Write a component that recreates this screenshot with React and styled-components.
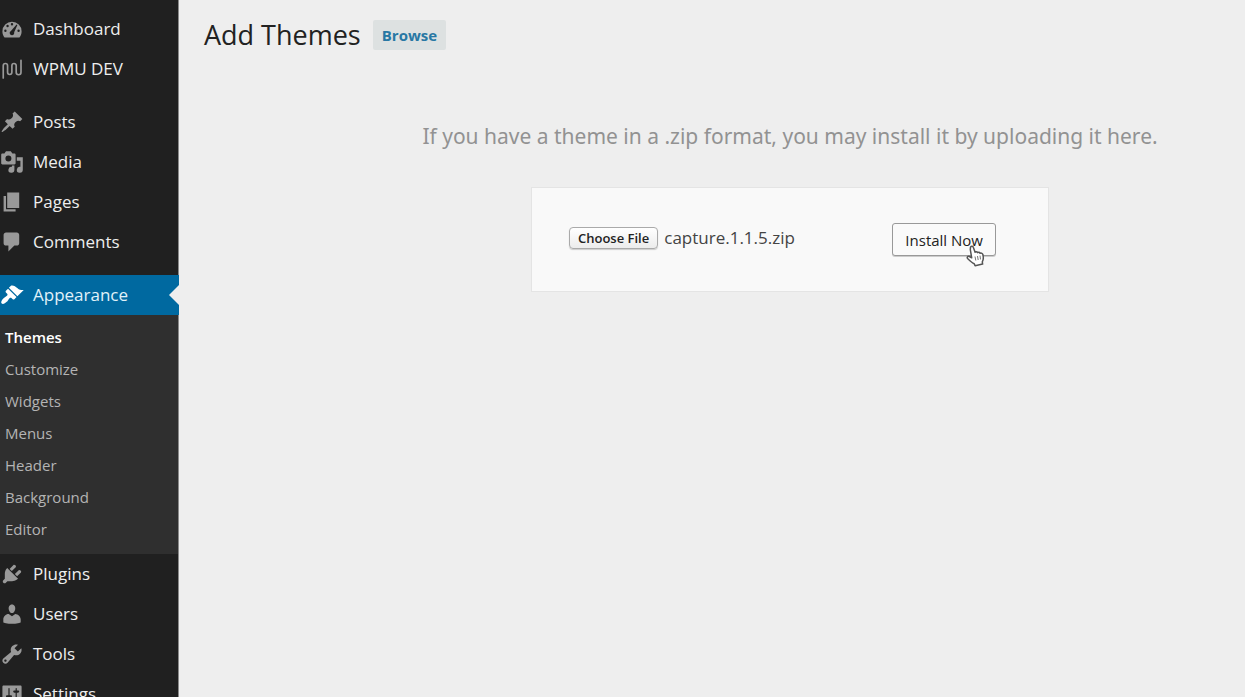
import React, { useRef, useState } from "react";
import styled, { createGlobalStyle, css } from "styled-components";

const GlobalStyle = createGlobalStyle`
  *, *::before, *::after { box-sizing: border-box; }
  body {
    margin: 0;
    background: #eee;
    color: #333;
    font-family: "Open Sans", "Noto Sans", sans-serif;
  }
`;

const Page = styled.div`
  display: flex;
  height: 100vh;
  overflow: hidden;
`;

const Sidebar = styled.nav`
  flex: none;
  width: 179px;
  padding-top: 9px;
  background: #202020;
  border-right: 1px solid #8a8a8a;
`;

const MenuGroup = styled.ul`
  margin: 0;
  padding: 0;
  list-style: none;

  & + & {
    margin-top: 13px;
  }
`;

const MenuLink = styled.a`
  position: relative;
  display: flex;
  align-items: center;
  gap: 9px;
  height: 40px;
  color: #eee;
  font-size: 17px;
  line-height: 24px;
  text-decoration: none;

  ${({ $current }) =>
    $current &&
    css`
      margin-right: -1px;
      background: #0069a0;
      color: #e0f2fa;

      &::after {
        content: "";
        position: absolute;
        right: 0;
        top: 10px;
        border: 10px solid transparent;
        border-left-width: 0;
        border-right-color: #eee;
      }
    `}
`;

const MenuIcon = styled.svg`
  flex: none;
  width: 24px;
  height: 24px;
  fill: ${({ $current }) => ($current ? "#fff" : "#999")};
`;

const SubMenu = styled.ul`
  margin: 0;
  padding: 6px 0 9px;
  list-style: none;
  background: #2f2f2f;
`;

const SubLink = styled.a`
  display: block;
  padding-left: 5px;
  color: ${({ $current }) => ($current ? "#fff" : "#b4b4b4")};
  font-size: 15px;
  font-weight: ${({ $current }) => ($current ? 600 : 400)};
  line-height: 32px;
  text-decoration: none;
`;

const Main = styled.main`
  flex: 1;
  min-width: 0;
`;

const Header = styled.header`
  display: flex;
  align-items: center;
  gap: 12px;
  padding: 16px 25px 0;
`;

const Title = styled.h1`
  margin: 0;
  color: #222;
  font-size: 27px;
  font-weight: 400;
  line-height: 38px;
`;

const BrowseLink = styled.a`
  padding: 0 9px;
  border-radius: 2px;
  background: #dde1e1;
  color: #2878a4;
  font-size: 15px;
  font-weight: 700;
  line-height: 30px;
  text-decoration: none;
`;

const Upload = styled.section`
  display: flex;
  flex-direction: column;
  align-items: center;
  gap: 36px;
  padding: 67px 0 0 156px;
`;

const Help = styled.p`
  margin: 0;
  color: #929292;
  font-family: "Noto Sans", "Open Sans", sans-serif;
  font-size: 21px;
  line-height: 30px;
  white-space: nowrap;
`;

const UploadForm = styled.form`
  display: flex;
  align-items: flex-start;
  justify-content: space-between;
  width: 518px;
  padding: 35px 52px 35px 37px;
  border: 1px solid #e4e4e4;
  background: #f9f9f9;
`;

const FilePicker = styled.div`
  display: flex;
  align-items: center;
  gap: 6px;
  height: 30px;
`;

const FileInput = styled.input`
  display: none;
`;

const ChooseButton = styled.button`
  height: 22px;
  padding: 0 8px;
  border: 1px solid #aaa;
  border-radius: 4px;
  background: linear-gradient(#fff, #ececec);
  box-shadow: 0 1px 1px #ccc;
  color: #222;
  font-family: inherit;
  font-size: 13px;
  font-weight: 600;
  line-height: 20px;
`;

const FileName = styled.output`
  color: #444;
  font-size: 17px;
  line-height: 24px;
`;

const InstallWrap = styled.div`
  position: relative;
`;

const InstallButton = styled.button`
  display: block;
  height: 33px;
  padding: 0 12px;
  border: 1px solid #999;
  border-radius: 3px;
  background: #fafafa;
  box-shadow: 0 1px 0 #ccc;
  color: #222;
  font-family: inherit;
  font-size: 15px;
  line-height: 30px;
`;

const Pointer = styled.svg`
  position: absolute;
  left: 73px;
  top: 22px;
  width: 20px;
  height: 22px;
  pointer-events: none;
`;

const icons = {
  dashboard: (
    <path
      fillRule="evenodd"
      d="M3.8 17h12.4c1.1-1.4 1.8-3.1 1.8-5a8 8 0 1 0-16 0c0 1.900.7 3.600 1.800 5zM10 5a1 1 0 1 1 0 2 1 1 0 0 1 0-2zM6.300 6.500a1 1 0 1 1 0 2 1 1 0 0 1 0-2zM13.800 6.200l.7.500-2.700 6.100c.4 1.200-.5 2.400-1.800 2.400a1.900 1.900 0 0 1-.9-3.600zM4.500 10.500a1 1 0 1 1 0 2 1 1 0 0 1 0-2zM15.500 10.500a1 1 0 1 1 0 2 1 1 0 0 1 0-2z"
    />
  ),
  wpmu: (
    <path
      fill="none"
      stroke="#999"
      strokeWidth="1.4"
      strokeLinecap="round"
      d="M2.700 17.500V7.200a1.800 1.800 0 0 1 3.600 0v5.600a1.800 1.800 0 0 0 3.600 0V7.200a1.800 1.800 0 0 1 3.600 0v5.600a2 2 0 0 0 4 0V2.700"
    />
  ),
  posts: (
    <path d="M10.44 3.02l1.82-1.82 6.36 6.35-1.83 1.82c-1.05-.68-2.48-.57-3.41.36l-.75.75c-.92.93-1.04 2.35-.35 3.41l-1.83 1.82-2.41-2.41-2.8 2.79c-.42.42-3.38 2.71-3.8 2.290s1.860-3.390 2.280-3.810l2.790-2.790L4.100 9.360l1.830-1.820c1.050.690 2.480.570 3.400-.360l.750-.750c.930-.920 1.050-2.350.360-3.410z" />
  ),
  media: (
    <path
      fillRule="evenodd"
      d="M13 11V4c0-.55-.45-1-1-1h-1.670L9 1H5L3.670 3H2c-.55 0-1 .45-1 1v7c0 .55.45 1 1 1h10c.55 0 1-.45 1-1zM7 4.500a2.500 2.500 0 1 1 0 5 2.500 2.500 0 0 1 0-5zM14 6h5v10.500a2.500 2.500 0 1 1-2-2.450V9h-3V6zM10 14.050V13h2v3.500a2.500 2.500 0 1 1-2-2.450z"
    />
  ),
  pages: <path d="M6 15V2h10v13H6zm-1 1h8v2H3V5h2v11z" />,
  comments: (
    <path d="M5 2h9c1.1 0 2 .9 2 2v7c0 1.1-.9 2-2 2h-2l-5 5v-5H5c-1.1 0-2-.9-2-2V4c0-1.1.9-2 2-2z" />
  ),
  appearance: (
    <path d="M14.48 11.06L7.41 3.99l1.5-1.5c.5-.56 2.3-.47 3.51.32 1.21.8 1.43 1.28 2.91 2.1 1.18.64 2.45 1.26 4.45.85zm-.71.71L6.7 4.7 4.93 6.47c-.39.39-.39 1.02 0 1.41l1.06 1.06c.39.39.39 1.03 0 1.42-.6.6-1.43 1.11-2.21 1.69-.35.26-.7.53-1.01.84C1.43 14.23.4 16.08 1.4 17.07c.99 1 2.84-.03 4.18-1.36.31-.31.58-.66.85-1.02.57-.78 1.08-1.61 1.69-2.21.39-.39 1.02-.39 1.41 0l1.06 1.06c.39.39 1.02.39 1.41 0z" />
  ),
  plugins: (
    <path d="M13.11 4.36L9.87 7.6 8 5.73l3.24-3.24c.35-.34 1.05-.2 1.56.32.52.51.66 1.21.31 1.55zm-8 1.77l.91-1.12 9.01 9.01-1.19.84c-.71.71-2.63 1.16-3.82 1.16H6.14L4.9 17.26c-.59.59-1.54.59-2.12 0-.59-.58-.59-1.53 0-2.12l1.24-1.24v-3.88c0-1.13.4-3.19 1.09-3.89zm7.26 3.97l3.24-3.24c.34-.35 1.04-.21 1.55.31.52.51.66 1.21.31 1.55l-3.24 3.25z" />
  ),
  users: (
    <path d="M10 9.25c-2.27 0-2.73-3.44-2.73-3.44C7 4.02 7.82 2 9.97 2c2.16 0 2.98 2.02 2.71 3.81 0 0-.41 3.44-2.68 3.44zm0 2.57L12.72 10c2.39 0 4.52 2.33 4.52 4.53v2.49s-3.65 1.13-7.24 1.13c-3.65 0-7.24-1.13-7.24-1.13v-2.49c0-2.25 1.94-4.48 4.47-4.48z" />
  ),
  tools: (
    <path
      fillRule="evenodd"
      d="M16.68 9.77c-1.34 1.34-3.3 1.67-4.95.99l-5.41 6.52c-.99.99-2.59.99-3.58 0s-.99-2.59 0-3.57l6.52-5.42c-.68-1.65-.35-3.61.99-4.95 1.28-1.28 3.12-1.62 4.72-1.06l-2.89 2.89 2.82 2.82 2.86-2.87c.53 1.58.18 3.39-1.08 4.65zM3.81 16.21c.4.39 1.04.39 1.43 0 .4-.4.4-1.04 0-1.43-.39-.4-1.03-.4-1.43 0-.39.39-.39 1.03 0 1.43z"
    />
  ),
  settings: (
    <path
      fillRule="evenodd"
      d="M18 16V4c0-.55-.45-1-1-1H3c-.55 0-1 .45-1 1v12c0 .55.45 1 1 1h14c.55 0 1-.45 1-1zM8 11h1c.55 0 1 .45 1 1s-.45 1-1 1H8v1.5c0 .28-.22.5-.5.5s-.5-.22-.5-.5V13H6c-.55 0-1-.45-1-1s.45-1 1-1h1V5.5c0-.28.22-.5.5-.5s.5.22.5.5V11zm5-2h-1c-.55 0-1-.45-1-1s.45-1 1-1h1V5.5c0-.28.22-.5.5-.5s.5.22.5.5V7h1c.55 0 1 .45 1 1s-.45 1-1 1h-1v5.5c0 .28-.22.5-.5.5s-.5-.22-.5-.5V9z"
    />
  ),
};

const topGroups = [
  [
    ["dashboard", "Dashboard"],
    ["wpmu", "WPMU DEV"],
  ],
  [
    ["posts", "Posts"],
    ["media", "Media"],
    ["pages", "Pages"],
    ["comments", "Comments"],
  ],
];

const themeLinks = ["Themes", "Customize", "Widgets", "Menus", "Header", "Background", "Editor"];

const lowerItems = [
  ["plugins", "Plugins"],
  ["users", "Users"],
  ["tools", "Tools"],
  ["settings", "Settings"],
];

function MenuItem({ icon, label, current, children }) {
  return (
    <li>
      <MenuLink href="#" $current={current}>
        <MenuIcon viewBox="0 0 20 20" $current={current} aria-hidden="true">
          {icons[icon]}
        </MenuIcon>
        {label}
      </MenuLink>
      {children}
    </li>
  );
}

function HandPointer() {
  return (
    <Pointer viewBox="0 0 20 22" aria-hidden="true">
      <path
        d="M5.500 2.200C6.300.6 8 1 8.400 2.500l1.700 4.700c1-.6 2-.4 2.500.4 1-.5 2-.2 2.500.7 1.300-.5 2.500.1 2.800 1.500.6 2.400.6 5-.6 7l.3 2.300-7.500 1.700-.9-2c-2.200-.9-4.700-3.400-6.600-5.300-1-1.200.3-2.700 1.800-2l2.300 1.300-1.400-8.300z"
        fill="#fff"
        stroke="#555"
        strokeWidth="1.500"
        strokeLinejoin="round"
      />
      <path d="M10 11.500l.8 4M12.500 11l.7 4M15 10.600l.5 3.800" stroke="#777" strokeWidth="1" />
    </Pointer>
  );
}

export default function App() {
  const fileInput = useRef(null);
  const [fileName, setFileName] = useState("capture.1.1.5.zip");

  return (
    <>
      <GlobalStyle />
      <Page>
        <Sidebar aria-label="Admin menu">
          {topGroups.map((group) => (
            <MenuGroup key={group[0][0]}>
              {group.map(([icon, label]) => (
                <MenuItem key={icon} icon={icon} label={label} />
              ))}
            </MenuGroup>
          ))}
          <MenuGroup>
            <MenuItem icon="appearance" label="Appearance" current>
              <SubMenu>
                {themeLinks.map((label, i) => (
                  <li key={label}>
                    <SubLink href="#" $current={i === 0}>
                      {label}
                    </SubLink>
                  </li>
                ))}
              </SubMenu>
            </MenuItem>
            {lowerItems.map(([icon, label]) => (
              <MenuItem key={icon} icon={icon} label={label} />
            ))}
          </MenuGroup>
        </Sidebar>
        <Main>
          <Header>
            <Title>Add Themes</Title>
            <BrowseLink href="#">Browse</BrowseLink>
          </Header>
          <Upload>
            <Help>If you have a theme in a .zip format, you may install it by uploading it here.</Help>
            <UploadForm onSubmit={(e) => e.preventDefault()}>
              <FilePicker>
                <FileInput
                  ref={fileInput}
                  id="theme-zip"
                  type="file"
                  accept=".zip"
                  aria-label="Theme zip file"
                  onChange={(e) => e.target.files[0] && setFileName(e.target.files[0].name)}
                />
                <ChooseButton type="button" onClick={() => fileInput.current.click()}>
                  Choose File
                </ChooseButton>
                <FileName htmlFor="theme-zip">{fileName}</FileName>
              </FilePicker>
              <InstallWrap>
                <InstallButton type="submit">Install Now</InstallButton>
                <HandPointer />
              </InstallWrap>
            </UploadForm>
          </Upload>
        </Main>
      </Page>
    </>
  );
}
